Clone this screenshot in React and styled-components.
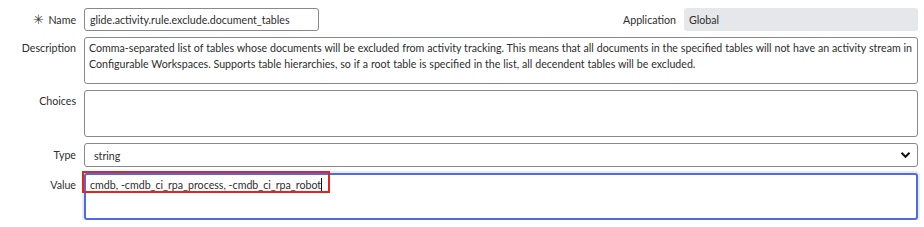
import styled, { createGlobalStyle } from 'styled-components';

/* ---------------------------------- style --------------------------------- */
const GlobalStyle = createGlobalStyle`
  body {
    margin: 0;
    background: #fff;
    font-family: Lato, "Open Sans", sans-serif;
    color: #2e2e2e;
  }
`;

const Form = styled.div`
  display: flex;
  flex-direction: column;
  gap: 6px;
  padding: 8px 6px 0 0;
  font-size: 10.65px;
`;

const Row = styled.div`
  display: grid;
  grid-template-columns: 76px 1fr;
  column-gap: 8px;
  align-items: start;
`;

const Label = styled.label`
  text-align: right;
  line-height: 15px;
  padding-top: ${(p) => p.$top || 4}px;
  white-space: nowrap;
  color: #2e2e2e;
`;

const Star = styled.span`
  font-size: 13px;
  margin-right: 4px;
  color: #444;
`;

const SplitRow = styled.div`
  display: flex;
  align-items: center;
`;

const Input = styled.div`
  box-sizing: border-box;
  width: ${(p) => p.$width || '100%'};
  height: 23px;
  border: 1px solid #868a90;
  border-radius: 3px;
  padding: 3px 5px;
  line-height: 15px;
  background: #fff;
`;

const Spacer = styled.div`
  flex: 1;
`;

const SideLabel = styled.span`
  margin-right: 8px;
`;

const ReadOnly = styled.div`
  box-sizing: border-box;
  width: 234px;
  height: 23px;
  border-radius: 3px;
  padding: 4px 5px;
  line-height: 15px;
  background: #e6e7ea;
`;

const Area = styled.div`
  box-sizing: border-box;
  height: 47px;
  border: 1px solid #868a90;
  border-radius: 3px;
  padding: 2px 2px 2px 4px;
  line-height: 16px;
  word-spacing: 0.15px;
  background: #fff;
`;

const Select = styled.div`
  box-sizing: border-box;
  display: flex;
  align-items: center;
  justify-content: space-between;
  height: 24px;
  border: 1px solid #868a90;
  border-radius: 3px;
  padding: 0 6px 0 9px;
  background: #fff;
`;

const ValueArea = styled.div`
  box-sizing: border-box;
  position: relative;
  height: 47px;
  border: 2px solid #4f6ae6;
  border-radius: 3px;
  padding: 2px 4px;
  line-height: 16px;
  box-shadow: 0 0 0 2px #e8edfb;
  background: #fff;
`;

const Highlight = styled.div`
  position: absolute;
  left: -4px;
  top: -4px;
  width: 248px;
  height: 22px;
  border: 2px solid #e8231b;
  box-sizing: border-box;
`;

const Caret = styled.span`
  display: inline-block;
  width: 1px;
  height: 14px;
  background: #111;
  vertical-align: -3px;
`;

/* -------------------------------- component ------------------------------- */
const App = () => (
  <>
    <GlobalStyle />
    <Form>
      <Row>
        <Label>
          <Star>✳</Star>Name
        </Label>
        <SplitRow>
          <Input $width="235px">glide.activity.rule.exclude.document_tables</Input>
          <Spacer />
          <SideLabel>Application</SideLabel>
          <ReadOnly>Global</ReadOnly>
        </SplitRow>
      </Row>
      <Row>
        <Label $top={3}>Description</Label>
        <Area>
          Comma-separated list of tables whose documents will be excluded from activity tracking. This
          means that all documents in the specified tables will not have an activity stream in
          Configurable Workspaces. Supports table hierarchies, so if a root table is specified in the
          list, all decendent tables will be excluded.
        </Area>
      </Row>
      <Row>
        <Label $top={3}>Choices</Label>
        <Area />
      </Row>
      <Row>
        <Label>Type</Label>
        <Select>
          <span>string</span>
          <svg width="11" height="8" viewBox="0 0 11 8">
            <path d="M1.5 1.8 L5.5 5.8 L9.5 1.8" fill="none" stroke="#111" strokeWidth="2" />
          </svg>
        </Select>
      </Row>
      <Row>
        <Label>Value</Label>
        <ValueArea>
          <Highlight />
          cmdb, -cmdb_ci_rpa_process, -cmdb_ci_rpa_robot
          <Caret />
        </ValueArea>
      </Row>
    </Form>
  </>
);

export default App;
